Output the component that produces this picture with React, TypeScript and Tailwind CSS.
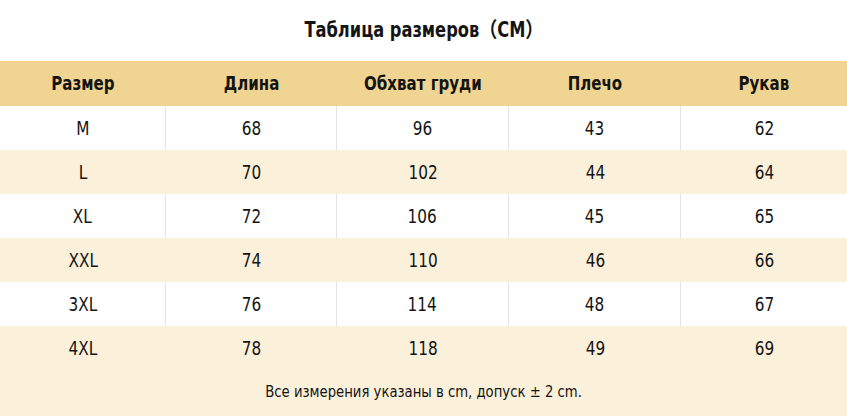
const headers = ['Размер', 'Длина', 'Обхват груди', 'Плечо', 'Рукав']

const rows = [
  ['M', '68', '96', '43', '62'],
  ['L', '70', '102', '44', '64'],
  ['XL', '72', '106', '45', '65'],
  ['XXL', '74', '110', '46', '66'],
  ['3XL', '76', '114', '48', '67'],
  ['4XL', '78', '118', '49', '69'],
]

const font = "font-['DejaVu_Sans_Condensed','DejaVu_Sans','Noto_Sans_CJK_SC',sans-serif] font-stretch-condensed"
const cols = 'grid grid-cols-[166px_171px_172px_172px_166px]'

export default function App() {
  return (
    <div className={`w-[847px] h-[416px] bg-white text-[#141414] overflow-hidden ${font}`}>
      <div className="h-[61px] flex items-center justify-center pt-[1px]">
        <h1 className="inline-block scale-x-[0.86] text-[21px] font-semibold">Таблица размеров（CM）</h1>
      </div>

      <div className={`${cols} h-[45px] bg-[#f0d491] items-center text-center text-[19px] font-bold`}>
        {headers.map((h) => (
          <div key={h}>
            <span className="inline-block scale-x-[0.88]">{h}</span>
          </div>
        ))}
      </div>

      {rows.map((row, i) => {
        const odd = i % 2 === 1
        return (
          <div
            key={row[0]}
            className={
              odd
                ? `${cols} h-[44px] bg-[#fbf0da] text-center text-[20px]`
                : `${cols} h-[44px] bg-white text-center text-[20px] divide-x divide-[#e4e4e4]`
            }
          >
            {row.map((cell, j) => (
              <div key={j} className="flex items-center justify-center">
                <span className="inline-block scale-x-[0.85]">{cell}</span>
              </div>
            ))}
          </div>
        )
      })}

      <div className="h-[47px] bg-[#fbf0da] flex items-center justify-center pb-[2px] text-[15px]">
        <span className="inline-block scale-x-[0.98]">Все измерения указаны в cm, допуск ± 2 cm.</span>
      </div>
    </div>
  )
}
